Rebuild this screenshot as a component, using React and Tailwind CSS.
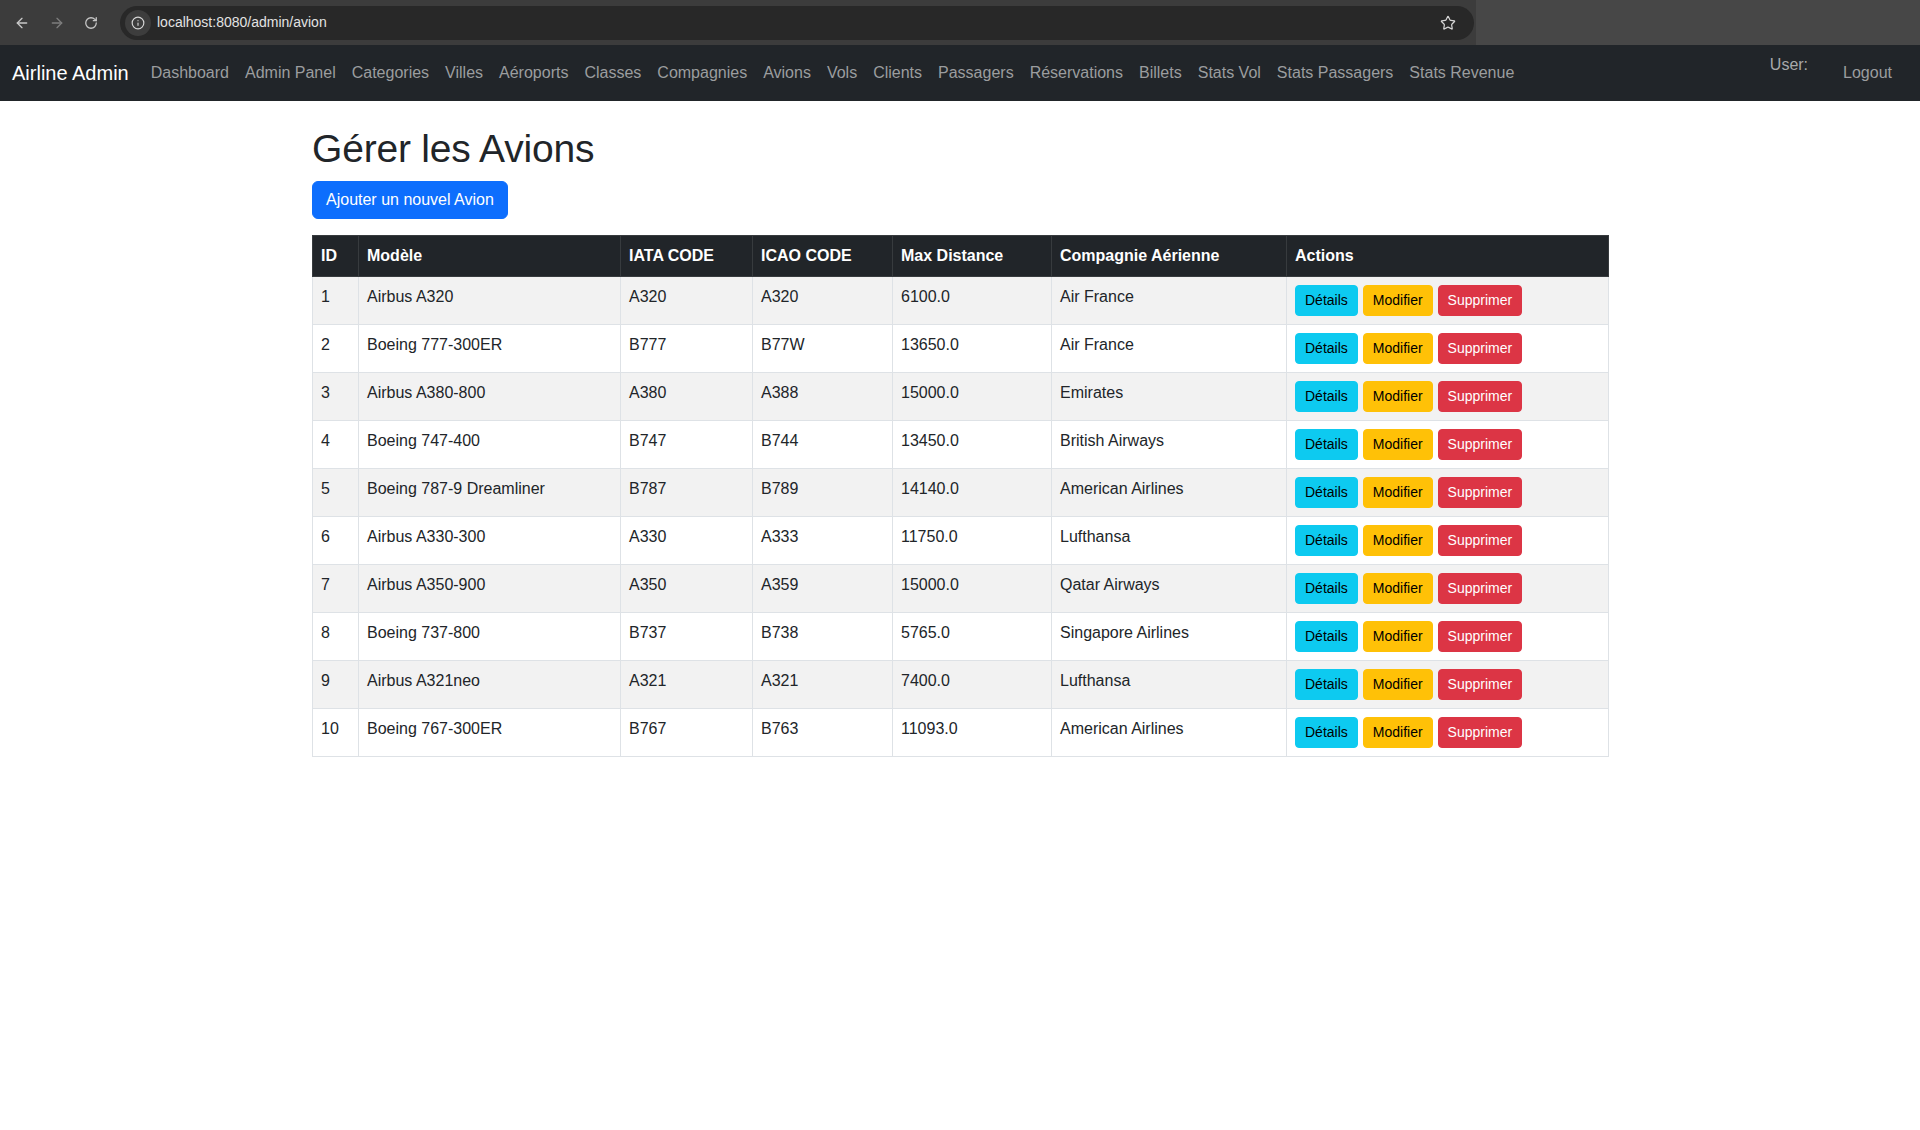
import React from "react";
import { ArrowLeft, ArrowRight, RotateCw, Info, Star } from "lucide-react";

const navLinks = [
  "Dashboard",
  "Admin Panel",
  "Categories",
  "Villes",
  "Aéroports",
  "Classes",
  "Compagnies",
  "Avions",
  "Vols",
  "Clients",
  "Passagers",
  "Réservations",
  "Billets",
  "Stats Vol",
  "Stats Passagers",
  "Stats Revenue",
];

const avions = [
  { id: 1, modele: "Airbus A320", iata: "A320", icao: "A320", distance: "6100.0", compagnie: "Air France" },
  { id: 2, modele: "Boeing 777-300ER", iata: "B777", icao: "B77W", distance: "13650.0", compagnie: "Air France" },
  { id: 3, modele: "Airbus A380-800", iata: "A380", icao: "A388", distance: "15000.0", compagnie: "Emirates" },
  { id: 4, modele: "Boeing 747-400", iata: "B747", icao: "B744", distance: "13450.0", compagnie: "British Airways" },
  { id: 5, modele: "Boeing 787-9 Dreamliner", iata: "B787", icao: "B789", distance: "14140.0", compagnie: "American Airlines" },
  { id: 6, modele: "Airbus A330-300", iata: "A330", icao: "A333", distance: "11750.0", compagnie: "Lufthansa" },
  { id: 7, modele: "Airbus A350-900", iata: "A350", icao: "A359", distance: "15000.0", compagnie: "Qatar Airways" },
  { id: 8, modele: "Boeing 737-800", iata: "B737", icao: "B738", distance: "5765.0", compagnie: "Singapore Airlines" },
  { id: 9, modele: "Airbus A321neo", iata: "A321", icao: "A321", distance: "7400.0", compagnie: "Lufthansa" },
  { id: 10, modele: "Boeing 767-300ER", iata: "B767", icao: "B763", distance: "11093.0", compagnie: "American Airlines" },
];

const columns = [
  { label: "ID", w: "w-[46px]" },
  { label: "Modèle", w: "w-[262px]" },
  { label: "IATA CODE", w: "w-[132px]" },
  { label: "ICAO CODE", w: "w-[140px]" },
  { label: "Max Distance", w: "w-[159px]" },
  { label: "Compagnie Aérienne", w: "w-[235px]" },
  { label: "Actions", w: "w-[322px]" },
];

const BrowserBar = () => (
  <div className="flex h-[45px] bg-[#474747]">
    <div className="flex items-center w-[1476px] bg-[#3c3c3c] pl-[14px] pr-[2px]">
      <div className="flex items-center gap-[19px] text-[#c7c7c7]">
        <ArrowLeft size={16} strokeWidth={2} />
        <ArrowRight size={16} strokeWidth={2} className="text-[#7d7d7d]" />
        <RotateCw size={14} strokeWidth={2.2} />
      </div>
      <div className="ml-[22px] flex items-center flex-1 h-[34px] rounded-full bg-[#282828] pl-[5px] pr-[18px]">
        <div className="flex items-center justify-center w-[26px] h-[26px] rounded-full bg-[#3d3d3d] text-[#d6d6d6]">
          <Info size={14} strokeWidth={2} />
        </div>
        <span className="ml-[6px] text-[14px] text-[#e3e3e3]">localhost:8080/admin/avion</span>
        <Star size={16} strokeWidth={1.8} className="ml-auto text-[#d6d6d6]" />
      </div>
    </div>
  </div>
);

const Navbar = () => (
  <nav className="flex items-stretch bg-[#212529] h-[56px] py-2 pl-3 pr-[12px]">
    <a className="text-white text-[20px] leading-[40px] mr-[14px] whitespace-nowrap">Airline Admin</a>
    <ul className="flex items-center">
      {navLinks.map((l) => (
        <li key={l}>
          <a className="block px-2 py-2 text-[16px] leading-6 text-[#9b9d9f] whitespace-nowrap">{l}</a>
        </li>
      ))}
    </ul>
    <div className="ml-auto flex items-start">
      <span className="text-[16px] leading-6 text-[#a7a9ab] mr-[27px]">User:</span>
      <a className="block px-2 py-2 text-[16px] leading-6 text-[#9b9d9f] mr-[8px]">Logout</a>
    </div>
  </nav>
);

const ActionButtons = () => (
  <div className="flex gap-[5px]">
    <button className="h-[31px] px-[9px] rounded-[4px] border border-[#0dcaf0] bg-[#0dcaf0] text-black text-[14px]">
      Détails
    </button>
    <button className="h-[31px] px-[9px] rounded-[4px] border border-[#ffc107] bg-[#ffc107] text-black text-[14px]">
      Modifier
    </button>
    <button className="h-[31px] px-[9px] rounded-[4px] border border-[#dc3545] bg-[#dc3545] text-white text-[14px]">
      Supprimer
    </button>
  </div>
);

export default function App() {
  return (
    <div className="min-h-[1130px] bg-white text-[#212529]" style={{ fontFamily: '"Liberation Sans", Arial, sans-serif' }}>
      <BrowserBar />
      <Navbar />

      <div className="w-[1296px] mx-auto mt-6">
        <h1 className="text-[39px] leading-[48px] font-medium mb-2 tracking-[-0.2px]">Gérer les Avions</h1>
        <button className="h-[38px] px-[13px] rounded-[6px] bg-[#0d6efd] border border-[#0d6efd] text-white text-[16px] mb-4">
          Ajouter un nouvel Avion
        </button>

        <table className="w-full table-fixed border-collapse text-[16px]">
          <thead>
            <tr>
              {columns.map((c) => (
                <th
                  key={c.label}
                  className={`${c.w} bg-[#212529] text-white font-bold text-left px-2 py-2 leading-6 border border-[#373b3e]`}
                >
                  {c.label}
                </th>
              ))}
            </tr>
          </thead>
          <tbody>
            {avions.map((a, i) => (
              <tr key={a.id} className={i % 2 === 0 ? "bg-[#f2f2f2]" : "bg-white"}>
                <td className="align-top px-2 py-2 leading-6 border border-[#dee2e6]">{a.id}</td>
                <td className="align-top px-2 py-2 leading-6 border border-[#dee2e6]">{a.modele}</td>
                <td className="align-top px-2 py-2 leading-6 border border-[#dee2e6]">{a.iata}</td>
                <td className="align-top px-2 py-2 leading-6 border border-[#dee2e6]">{a.icao}</td>
                <td className="align-top px-2 py-2 leading-6 border border-[#dee2e6]">{a.distance}</td>
                <td className="align-top px-2 py-2 leading-6 border border-[#dee2e6]">{a.compagnie}</td>
                <td className="align-top px-2 py-2 border border-[#dee2e6]">
                  <ActionButtons />
                </td>
              </tr>
            ))}
          </tbody>
        </table>
      </div>
    </div>
  );
}
